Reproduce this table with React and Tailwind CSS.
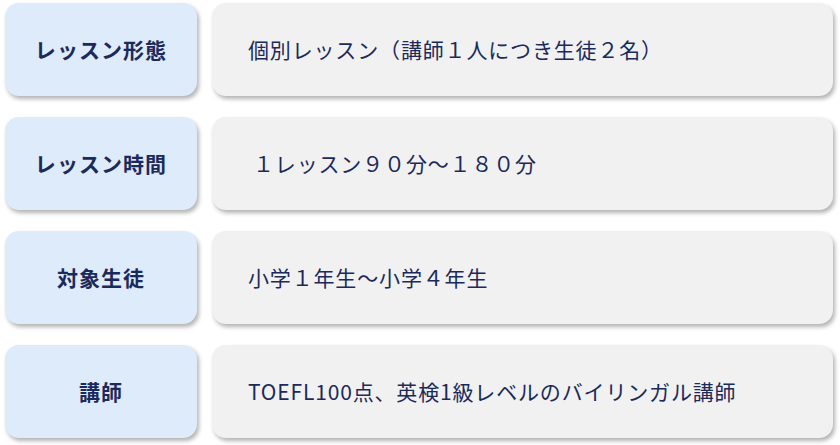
import React from 'react';

const rows = [
  { label: 'レッスン形態', value: '個別レッスン（講師１人につき生徒２名）' },
  { label: 'レッスン時間', value: '１レッスン９０分〜１８０分', indent: true },
  { label: '対象生徒', value: '小学１年生〜小学４年生' },
  { label: '講師', value: 'TOEFL100点、英検1級レベルのバイリンガル講師' },
];

const App = () => {
  return (
    <div
      className="w-[840px] h-[445px] bg-white pl-[5px] pr-[7px] pt-[3px] flex flex-col gap-[21px]"
      style={{ fontFamily: '"Noto Sans CJK JP", "Noto Sans", sans-serif' }}
    >
      {rows.map((row) => (
        <div key={row.label} className="flex gap-[15px] h-[93px]">
          <div className="w-[192px] shrink-0 rounded-[14px] bg-[#deebfb] shadow-[2px_3px_4px_rgba(0,0,0,0.3)] flex items-center justify-center">
            <span className="text-[21px] font-bold text-[#1b2a5a] tracking-[0.05em]">{row.label}</span>
          </div>
          <div className="flex-1 rounded-[14px] bg-[#f1f1f2] shadow-[2px_3px_4px_rgba(0,0,0,0.3)] flex items-center">
            <span
              className={`text-[21px] text-[#1b2a5a] tracking-[0.04em] ${row.indent ? 'pl-[41px]' : 'pl-[36px]'}`}
            >
              {row.value}
            </span>
          </div>
        </div>
      ))}
    </div>
  );
};

export default App;
